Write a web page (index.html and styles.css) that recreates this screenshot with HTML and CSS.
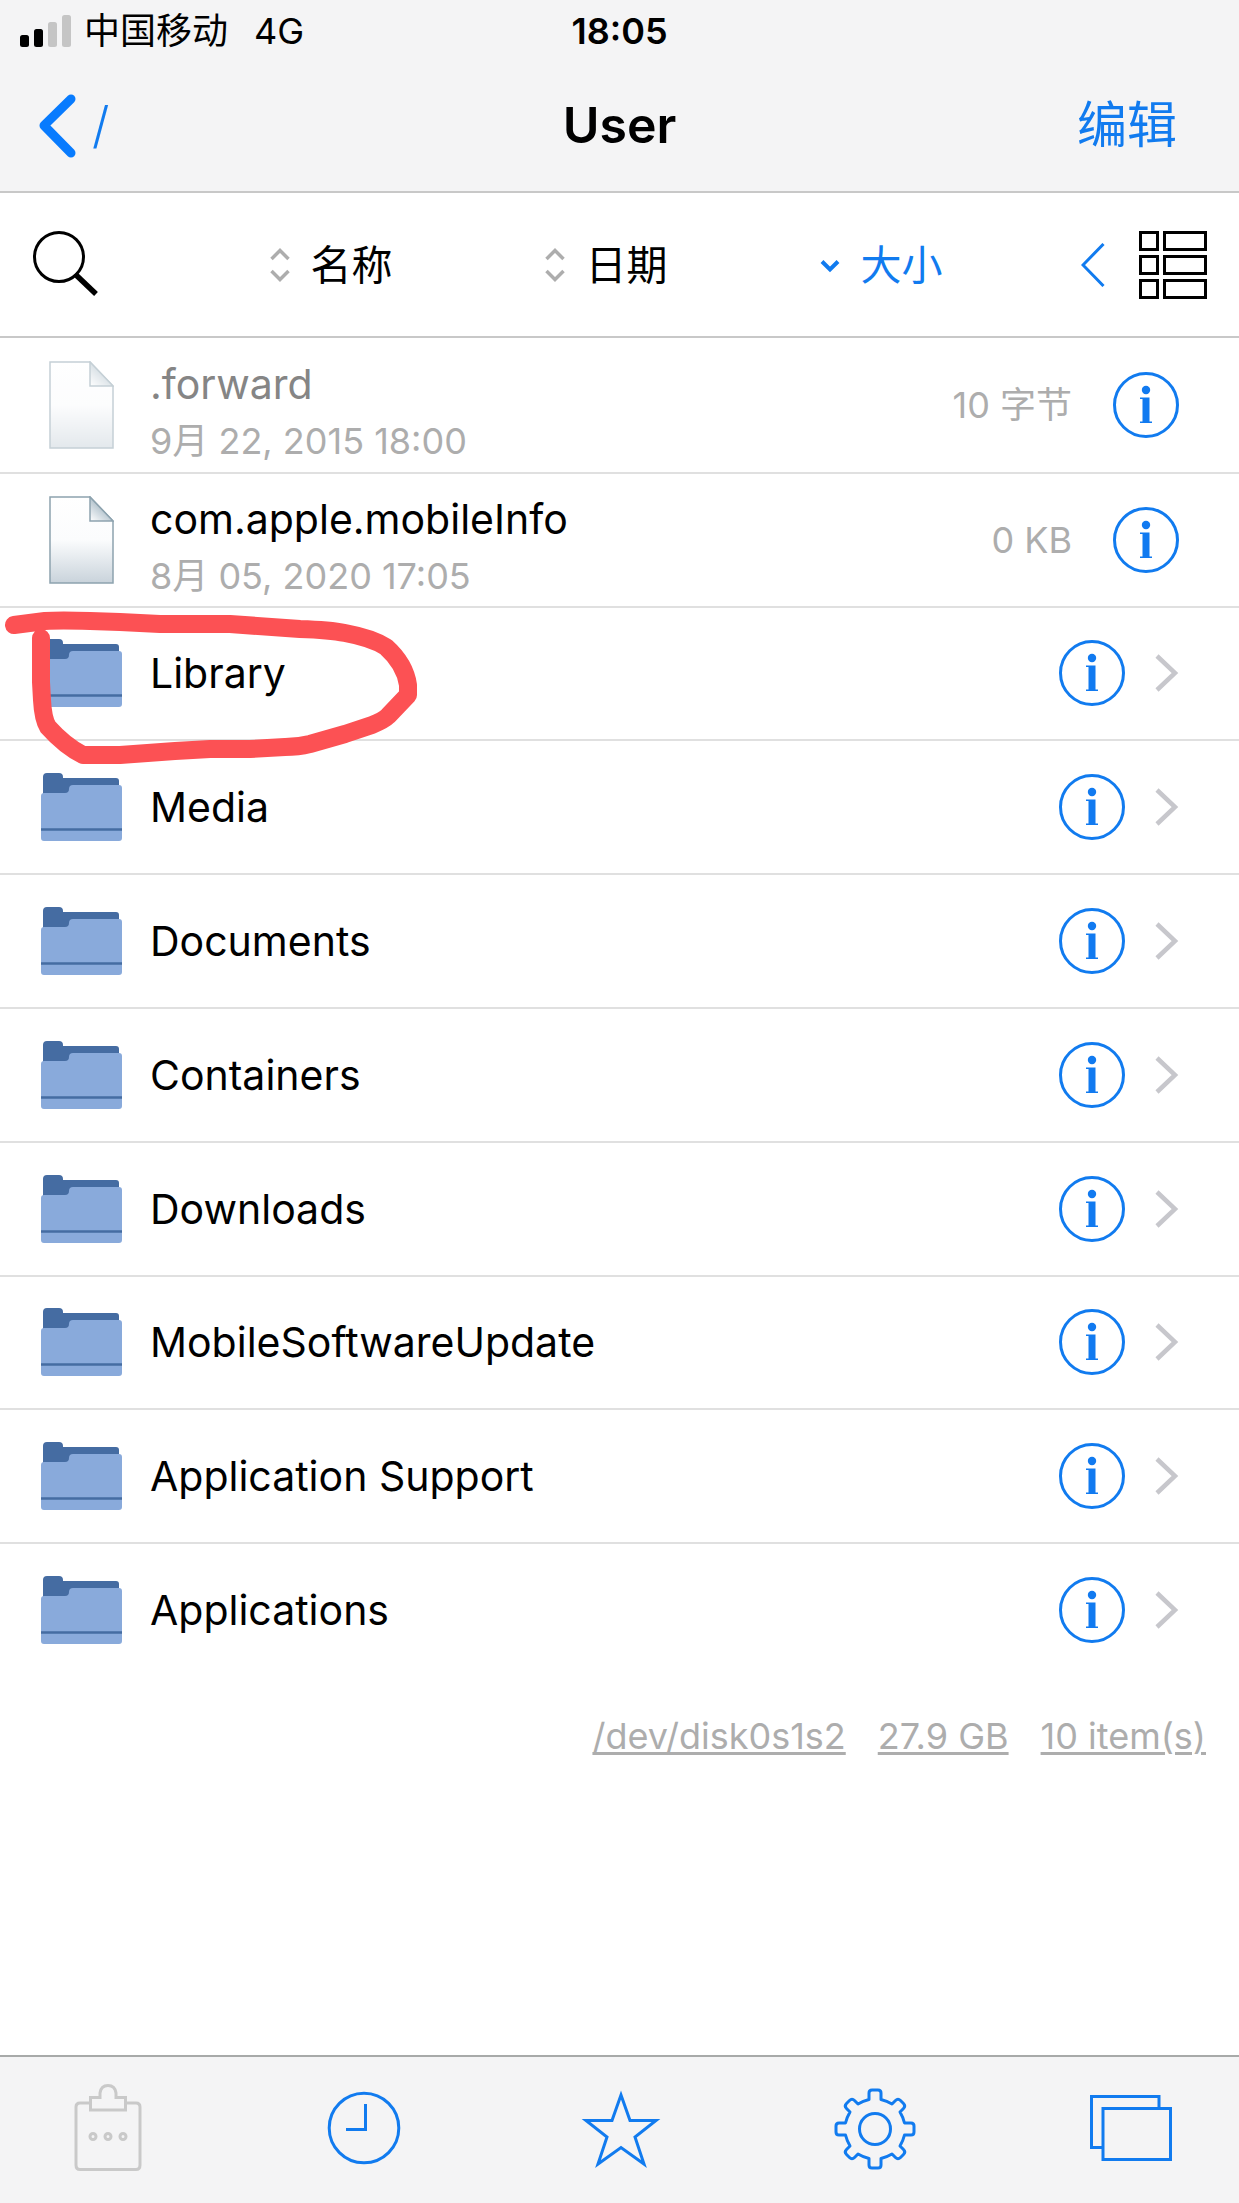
FILE: index.html
```html
<!DOCTYPE html>
<html lang="zh-CN">
<head>
<meta charset="utf-8">
<meta name="viewport" content="width=device-width, initial-scale=1">
<title>User</title>
<link rel="stylesheet" href="styles.css">
</head>
<body>
<svg class="sprite" width="0" height="0" aria-hidden="true">
  <defs>
    <linearGradient id="paper" x1="0" y1="0" x2="0" y2="1">
      <stop offset="0" stop-color="#fff"/>
      <stop offset=".5" stop-color="#fbfcfd"/>
      <stop offset="1" stop-color="#c9d3db"/>
    </linearGradient>
    <linearGradient id="curl" x1="0" y1="1" x2=".5" y2=".4">
      <stop offset="0" stop-color="#fff"/>
      <stop offset="1" stop-color="#b3c3cd"/>
    </linearGradient>
    <symbol id="file" viewBox="0 0 65 88">
      <path d="M1 1H41L64 25V87H1Z" fill="url(#paper)" stroke="#8da3af" stroke-width="1.5"/>
      <path d="M41 1L64 25H41Z" fill="url(#curl)" stroke="#8da3af" stroke-width="1.5"/>
    </symbol>
    <symbol id="folder" viewBox="0 0 81 68">
      <path d="M2 24V4Q2 0 6 0H18Q22 0 22 4V5H75Q78 5 78 8V24Z" fill="#456ca2"/>
      <path d="M0 23Q0 20 3 20H24Q28 20 28 16Q28 12 32 12H78Q81 12 81 15V65Q81 68 78 68H3Q0 68 0 65Z" fill="#89aadb"/>
      <path d="M0 56.5H81" stroke="#456ca2" stroke-width="2.5"/>
    </symbol>
    <symbol id="info" viewBox="0 0 66 66">
      <circle cx="33" cy="33" r="31.5" fill="none" stroke="#117bef" stroke-width="3"/>
      <circle cx="33" cy="18" r="4.2" fill="#117af0"/>
      <path d="M27 25.5H36.500V49.500H39V51H27V49.500H29.500V27H27Z" fill="#117af0"/>
    </symbol>
    <symbol id="next" viewBox="0 0 24 40">
      <path d="M2 3L20 20L2 37" fill="none" stroke="#c7c7cc" stroke-width="4.500"/>
    </symbol>
    <symbol id="sort" viewBox="0 0 20 34">
      <path d="M1.500 11L10 2.500L18.500 11M1.500 23L10 31.500L18.500 23" fill="none" stroke="#adadad" stroke-width="3.500"/>
    </symbol>
  </defs>
</svg>

<header class="header">
  <div class="status">
    <div class="carrier">
      <svg width="52" height="32" viewBox="0 0 52 32" aria-hidden="true">
        <rect x="0" y="20" width="9" height="12" rx="2.500"/>
        <rect x="14" y="14" width="9" height="18" rx="2.500"/>
        <rect x="28" y="7" width="9" height="25" rx="2.500" fill="#c5c5c5"/>
        <rect x="42" y="0" width="9" height="32" rx="2.500" fill="#c5c5c5"/>
      </svg>
      <span>中国移动</span>
      <span class="network">4G</span>
    </div>
    <time class="clock">18:05</time>
    <span></span>
  </div>
  <nav class="nav">
    <a class="back" href="#root">
      <svg width="38" height="64" viewBox="0 0 38 64" aria-hidden="true"><path d="M33 5L6 31.500L33 59" fill="none" stroke="#087bfe" stroke-width="9" stroke-linecap="round" stroke-linejoin="round"/></svg>
      <span>/</span>
    </a>
    <h1 class="title">User</h1>
    <button class="edit" type="button">编辑</button>
  </nav>
</header>

<div class="sortbar">
  <button class="tool" type="button" aria-label="搜索">
    <svg width="68" height="68" viewBox="0 0 68 68"><circle cx="26" cy="26" r="24.500" fill="none" stroke="#000" stroke-width="3"/><path d="M42 43L63 63" stroke="#000" stroke-width="5.500"/></svg>
  </button>
  <div class="sorts">
    <button class="sort" type="button"><svg width="20" height="34" aria-hidden="true"><use href="#sort"/></svg>名称</button>
    <button class="sort" type="button"><svg width="20" height="34" aria-hidden="true"><use href="#sort"/></svg>日期</button>
    <button class="sort active" type="button"><svg width="20" height="34" viewBox="0 0 20 34" aria-hidden="true"><path d="M2 13.500L10 21.500L18 13.500" fill="none" stroke="#117bef" stroke-width="4"/></svg>大小</button>
  </div>
  <div class="views">
    <button class="tool" type="button" aria-label="展开">
      <svg width="24" height="44" viewBox="0 0 24 44"><path d="M22.500 1L2 22L22.500 43" fill="none" stroke="#117bef" stroke-width="3"/></svg>
    </button>
    <button class="tool" type="button" aria-label="列表视图">
      <svg width="68" height="68" viewBox="0 0 68 68" fill="none" stroke="#000" stroke-width="3"><path d="M1.500 1.500H18.500V18.500H1.500ZM25.500 1.500H66.500V18.500H25.500ZM1.500 25.500H18.500V42.500H1.500ZM25.500 25.500H66.500V42.500H25.500ZM1.500 49.500H18.500V66.500H1.500ZM25.500 49.500H66.500V66.500H25.500Z"/></svg>
    </button>
  </div>
</div>

<main class="content">
  <ul class="list">
    <li class="row hidden-file">
      <svg class="icon" width="65" height="88" aria-hidden="true"><use href="#file" x="8" width="65" height="88"/></svg>
      <div class="label details"><span class="name">.forward</span><span class="date">9月 22, 2015 18:00</span></div>
      <span class="size">10 字节</span>
      <button class="tool" type="button" aria-label="信息"><svg width="66" height="66"><use href="#info"/></svg></button>
    </li>
    <li class="row">
      <svg class="icon" width="65" height="88" aria-hidden="true"><use href="#file" x="8" width="65" height="88"/></svg>
      <div class="label details"><span class="name">com.apple.mobileInfo</span><span class="date">8月 05, 2020 17:05</span></div>
      <span class="size">0 KB</span>
      <button class="tool" type="button" aria-label="信息"><svg width="66" height="66"><use href="#info"/></svg></button>
    </li>
    <li class="row">
      <svg class="icon" width="81" height="68" aria-hidden="true"><use href="#folder"/></svg>
      <a class="label name" href="#library">Library</a>
      <button class="tool" type="button" aria-label="信息"><svg width="66" height="66"><use href="#info"/></svg></button>
      <svg class="next" width="24" height="40" aria-hidden="true"><use href="#next"/></svg>
      <svg class="scribble" width="420" height="160" viewBox="0 0 420 160" aria-hidden="true"><path d="M14 17L45 13Q60 12 90 13L120 14L160 16H230L300 21Q330 22 345 25Q372 30 386 39Q405 56 408 77V87L388 108Q384 112 372 117L345 126L310 136Q298 139 285 139L250 141H210L175 143L120 147H83Q65 138 48 119Q43 111 42 92L41 74V30" fill="none" stroke="#fc5154" stroke-width="18" stroke-linecap="round" stroke-linejoin="round"/></svg>
    </li>
    <li class="row">
      <svg class="icon" width="81" height="68" aria-hidden="true"><use href="#folder"/></svg>
      <a class="label name" href="#media">Media</a>
      <button class="tool" type="button" aria-label="信息"><svg width="66" height="66"><use href="#info"/></svg></button>
      <svg class="next" width="24" height="40" aria-hidden="true"><use href="#next"/></svg>
    </li>
    <li class="row">
      <svg class="icon" width="81" height="68" aria-hidden="true"><use href="#folder"/></svg>
      <a class="label name" href="#documents">Documents</a>
      <button class="tool" type="button" aria-label="信息"><svg width="66" height="66"><use href="#info"/></svg></button>
      <svg class="next" width="24" height="40" aria-hidden="true"><use href="#next"/></svg>
    </li>
    <li class="row">
      <svg class="icon" width="81" height="68" aria-hidden="true"><use href="#folder"/></svg>
      <a class="label name" href="#containers">Containers</a>
      <button class="tool" type="button" aria-label="信息"><svg width="66" height="66"><use href="#info"/></svg></button>
      <svg class="next" width="24" height="40" aria-hidden="true"><use href="#next"/></svg>
    </li>
    <li class="row">
      <svg class="icon" width="81" height="68" aria-hidden="true"><use href="#folder"/></svg>
      <a class="label name" href="#downloads">Downloads</a>
      <button class="tool" type="button" aria-label="信息"><svg width="66" height="66"><use href="#info"/></svg></button>
      <svg class="next" width="24" height="40" aria-hidden="true"><use href="#next"/></svg>
    </li>
    <li class="row">
      <svg class="icon" width="81" height="68" aria-hidden="true"><use href="#folder"/></svg>
      <a class="label name" href="#update">MobileSoftwareUpdate</a>
      <button class="tool" type="button" aria-label="信息"><svg width="66" height="66"><use href="#info"/></svg></button>
      <svg class="next" width="24" height="40" aria-hidden="true"><use href="#next"/></svg>
    </li>
    <li class="row">
      <svg class="icon" width="81" height="68" aria-hidden="true"><use href="#folder"/></svg>
      <a class="label name" href="#support">Application Support</a>
      <button class="tool" type="button" aria-label="信息"><svg width="66" height="66"><use href="#info"/></svg></button>
      <svg class="next" width="24" height="40" aria-hidden="true"><use href="#next"/></svg>
    </li>
    <li class="row">
      <svg class="icon" width="81" height="68" aria-hidden="true"><use href="#folder"/></svg>
      <a class="label name" href="#applications">Applications</a>
      <button class="tool" type="button" aria-label="信息"><svg width="66" height="66"><use href="#info"/></svg></button>
      <svg class="next" width="24" height="40" aria-hidden="true"><use href="#next"/></svg>
    </li>
  </ul>
  <div class="summary">
    <a href="#disk">/dev/disk0s1s2</a>
    <a href="#space">27.9 GB</a>
    <a href="#items">10 item(s)</a>
  </div>
</main>

<footer class="toolbar">
  <button class="tool" type="button" aria-label="剪贴板" disabled>
    <svg width="82" height="88" viewBox="0 0 82 88" fill="none" stroke="#c9c9c9" stroke-width="3"><path d="M23 19H13Q9 19 9 23V81Q9 85.500 13 85.500H69Q73 85.500 73 81V23Q73 19 69 19H59"/><path d="M23.500 13.500H33V9Q34 1.500 41 1.500Q48 1.500 49 9V13.500H58.500V26H23.500Z"/><circle cx="26" cy="52.500" r="3"/><circle cx="41" cy="52.500" r="3"/><circle cx="56" cy="52.500" r="3"/></svg>
  </button>
  <button class="tool" type="button" aria-label="历史">
    <svg width="82" height="88" viewBox="0 0 82 88" fill="none" stroke="#117bef" stroke-width="3"><circle cx="41" cy="44" r="34.800"/><path d="M42.500 20V45.500H23"/></svg>
  </button>
  <button class="tool" type="button" aria-label="收藏">
    <svg width="82" height="88" viewBox="0 0 82 88" fill="none" stroke="#117bef" stroke-width="3"><path d="M42 11L51 36.500H77L56 53L65 80L42 63.500L19 80L28 53L7 36.500H33Z"/></svg>
  </button>
  <button class="tool" type="button" aria-label="设置">
    <svg width="82" height="88" viewBox="0 0 82 88" fill="none" stroke="#117bef" stroke-width="3" stroke-linejoin="round"><circle cx="41" cy="45" r="15.500"/><path d="M35 15.500V9Q35 6 38 6H44Q47 6 47 9V15.500Q53 17 58 20L61.500 16.500Q64 14 66.500 16.500L69.500 19.500Q72 22 69.500 24.500L66 28Q69 33 70.500 39H77Q80 39 80 42V48Q80 51 77 51H70.500Q69 57 66 62L69.500 65.500Q72 68 69.500 70.500L66.500 73.500Q64 76 61.500 73.500L58 70Q53 73 47 74.500V81Q47 84 44 84H38Q35 84 35 81V74.500Q29 73 24 70L20.500 73.500Q18 76 15.500 73.500L12.500 70.500Q10 68 12.500 65.500L16 62Q13 57 11.500 51H5Q2 51 2 48V42Q2 39 5 39H11.500Q13 33 16 28L12.500 24.500Q10 22 12.500 19.500L15.500 16.500Q18 14 20.500 16.500L24 20Q29 17 35 15.500Z"/></svg>
  </button>
  <button class="tool" type="button" aria-label="窗口">
    <svg width="82" height="88" viewBox="0 0 82 88" fill="none" stroke="#117bef" stroke-width="3"><path d="M13 63.500H1.500V12.500H69V24"/><path d="M13 24.500H80.500V75.500H13Z"/></svg>
  </button>
</footer>
</body>
</html>
```

FILE: styles.css
```css
* {
  box-sizing: border-box;
}

body {
  display: flex;
  flex-direction: column;
  min-height: 100vh;
  margin: 0;
  background: #fff;
  color: #000;
  font-family: Inter, "Noto Sans CJK SC", sans-serif;
}

a {
  color: inherit;
  text-decoration: none;
}

button {
  padding: 0;
  border: 0;
  background: none;
  color: inherit;
  font: inherit;
}

svg {
  display: block;
  flex: none;
}

.sprite {
  position: absolute;
}

.header {
  border-bottom: 2px solid #c8c8c8;
  background: #f4f4f5;
}

.status,
.nav {
  display: grid;
  grid-template-columns: 1fr auto 1fr;
  align-items: center;
}

.status {
  padding: 0 20px;
  font-size: 36px;
  line-height: 62px;
}

.carrier {
  display: flex;
  align-items: center;
  gap: 12px;
}

.network {
  padding-left: 14px;
}

.clock {
  font-weight: 600;
}

.nav {
  padding: 0 38px 2px;
  font-size: 50px;
  line-height: 127px;
}

.back {
  display: flex;
  align-items: center;
  gap: 16px;
  color: #117bef;
  font-weight: 300;
}

.title {
  margin: 0;
  font-size: inherit;
  font-weight: 600;
}

.edit {
  justify-self: end;
  margin-right: 24px;
  color: #117bef;
}

.sortbar {
  display: flex;
  align-items: center;
  justify-content: space-between;
  padding: 38px 32px 37px 33px;
  border-bottom: 2px solid #c8c8c8;
}

.sorts {
  display: flex;
  gap: 152px;
  margin-left: 30px;
}

.sort {
  display: flex;
  align-items: center;
  gap: 21px;
  font-size: 41px;
  line-height: 60px;
}

.active {
  color: #117bef;
}

.views {
  display: flex;
  align-items: center;
  gap: 34px;
}

.content {
  flex: 1;
}

.list {
  display: grid;
  grid-auto-rows: 1fr;
  min-height: 1338px;
  margin: 0;
  padding: 0;
  list-style: none;
}

.row {
  position: relative;
  display: flex;
  align-items: center;
  padding: 0 60px 0 41px;
}

.row + .row {
  border-top: 2px solid #e0e0e0;
}

.icon {
  width: 81px;
}

.label {
  flex: 1;
  margin-left: 28px;
}

.name {
  font-size: 41px;
  line-height: 58px;
}

.details {
  padding-top: 14px;
}

.hidden-file .name {
  color: #858585;
}

.hidden-file .icon {
  opacity: .5;
}

.label .name,
.date {
  display: block;
}

.date,
.size {
  color: #adadad;
  font-size: 36px;
  line-height: 56px;
}

.size {
  margin-right: 41px;
}

.next {
  margin-left: 30px;
}

.scribble {
  position: absolute;
  z-index: 1;
  top: 0;
  left: 0;
}

.summary {
  display: flex;
  justify-content: flex-end;
  gap: 32px;
  padding: 32px 33px;
  color: #adadad;
  font-size: 36px;
  line-height: 56px;
}

.summary a {
  text-decoration: underline;
  text-decoration-thickness: 3px;
  text-underline-offset: 3px;
}

.toolbar {
  display: flex;
  justify-content: space-between;
  padding: 27px 67px 31px;
  border-top: 2px solid #a8aaa9;
  background: #f4f4f5;
}
```
